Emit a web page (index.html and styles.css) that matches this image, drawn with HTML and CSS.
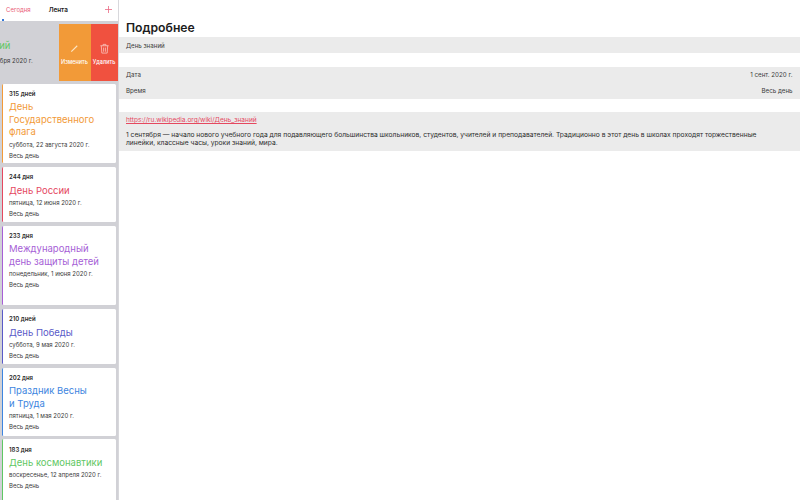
FILE: index.html
```html
<!DOCTYPE html>
<html lang="ru">
<head>
  <meta charset="UTF-8">
  <meta name="viewport" content="width=device-width, initial-scale=1.0">
  <title>Подробнее</title>
  <link rel="stylesheet" href="styles.css">
</head>
<body>
  <div class="sidebar">
    <div class="nav">
      <span class="nav-link">Сегодня</span>
      <span class="nav-title">Лента</span>
      <svg class="nav-add" viewBox="0 0 7 7"><path d="M3.5 0v7M0 3.5h7" fill="none" stroke="#ea6a84" stroke-width="0.8"/></svg>
    </div>
    <div class="progress"><div class="progress-dot"></div></div>
    <div class="swipe-row">
      <div class="swipe-text">
        <div class="swipe-title">День знаний</div>
        <div class="swipe-date">вторник, 1 сентября 2020 г.</div>
      </div>
      <div class="swipe-btn edit">
        <svg class="swipe-icon" viewBox="0 0 12 12"><path d="M2.5 9.5 9 3" fill="none" stroke="#fbe6c6" stroke-width="1.2"/></svg>
        <span>Изменить</span>
      </div>
      <div class="swipe-btn del">
        <svg class="swipe-icon" viewBox="0 0 12 12" fill="none" stroke="#fbd0cb" stroke-width="0.8"><path d="M1.5 3h9M4.5 3V1.5h3V3M2.5 3l.6 8h5.8l.6-8M5 5v4.5M7 5v4.5"/></svg>
        <span>Удалить</span>
      </div>
    </div>
    <div class="card orange h-80">
      <div class="card-days">315 дней</div>
      <div class="card-title">День Государственного флага</div>
      <div class="card-date">суббота, 22 августа 2020 г.</div>
      <div class="card-date">Весь день</div>
    </div>
    <div class="card red h-55">
      <div class="card-days">244 дня</div>
      <div class="card-title">День России</div>
      <div class="card-date">пятница, 12 июня 2020 г.</div>
      <div class="card-date">Весь день</div>
    </div>
    <div class="card purple h-80">
      <div class="card-days">233 дня</div>
      <div class="card-title">Международный<br>день защиты детей</div>
      <div class="card-date">понедельник, 1 июня 2020 г.</div>
      <div class="card-date">Весь день</div>
    </div>
    <div class="card indigo h-55">
      <div class="card-days">210 дней</div>
      <div class="card-title">День Победы</div>
      <div class="card-date">суббота, 9 мая 2020 г.</div>
      <div class="card-date">Весь день</div>
    </div>
    <div class="card blue h-68">
      <div class="card-days">202 дня</div>
      <div class="card-title">Праздник Весны<br>и Труда</div>
      <div class="card-date">пятница, 1 мая 2020 г.</div>
      <div class="card-date">Весь день</div>
    </div>
    <div class="card green h-80">
      <div class="card-days">183 дня</div>
      <div class="card-title">День космонавтики</div>
      <div class="card-date">воскресенье, 12 апреля 2020 г.</div>
      <div class="card-date">Весь день</div>
    </div>
  </div>
  <div class="detail">
    <h1>Подробнее</h1>
    <div class="group">
      <div class="row">День знаний</div>
    </div>
    <div class="group">
      <div class="row"><span>Дата</span><span>1 сент. 2020 г.</span></div>
      <div class="row"><span>Время</span><span>Весь день</span></div>
    </div>
    <div class="group">
      <div class="row"><a class="link" href="#">https://ru.wikipedia.org/wiki/День_знаний</a></div>
      <div class="row note">1 сентября — начало нового учебного года для подавляющего большинства школьников, студентов, учителей и преподавателей. Традиционно в этот день в школах проходят торжественные линейки, классные часы, уроки знаний, мира.</div>
    </div>
  </div>
</body>
</html>
```

FILE: styles.css
```css
* {
  margin: 0;
  padding: 0;
  box-sizing: border-box;
}
html, body {
  height: 100%;
  overflow: hidden;
}
body {
  font-family: Inter, 'Liberation Sans', sans-serif;
  display: flex;
  background: #ffffff;
  color: #2b2b2b;
}
.sidebar {
  width: 117.5px;
  height: 500px;
  flex-shrink: 0;
  background: #d1d1d6;
  overflow: hidden;
}
.nav {
  height: 19px;
  background: #ffffff;
  display: flex;
  align-items: center;
  padding: 0 6px;
}
.nav-link {
  font-size: 6px;
  color: #ea5c78;
}
.nav-title {
  font-size: 6.4px;
  font-weight: 600;
  color: #222222;
  margin-left: 18px;
}
.nav-add {
  margin-left: auto;
  width: 7px;
  height: 7px;
}
.progress {
  height: 2px;
  background: #ffffff;
}
.progress-dot {
  width: 2px;
  height: 2px;
  margin-left: 2px;
  background: #3478d8;
}
.swipe-row {
  display: flex;
  height: 57.5px;
  margin-top: 2.8px;
  overflow: hidden;
}
.swipe-text {
  width: 58.5px;
  overflow: hidden;
  padding-top: 16px;
  white-space: nowrap;
}
.swipe-title {
  margin-left: -49px;
  color: #5fc763;
  font-size: 9.5px;
  line-height: 12.5px;
  margin-bottom: 3px;
}
.swipe-date {
  margin-left: -48px;
  font-size: 6px;
  line-height: 11px;
  color: #3a3a3a;
}
.swipe-btn {
  display: flex;
  flex-direction: column;
  align-items: center;
  color: #ffffff;
  font-size: 5.5px;
  font-weight: 500;
  padding-top: 19px;
  white-space: nowrap;
}
.swipe-btn.edit {
  width: 32px;
  background: #f29a38;
}
.swipe-btn.del {
  width: 27px;
  background: #f0513f;
}
.swipe-icon {
  width: 11px;
  height: 11px;
  margin-bottom: 5px;
}
.card {
  width: 114px;
  margin: 3.8px 0 0 2px;
  padding: 6.2px 4px 0 6px;
  background: #ffffff;
  border-left: 1.7px solid #888888;
  border-radius: 1.5px;
}
.swipe-row + .card {
  margin-top: 2.3px;
}
.h-55 {
  height: 54.7px;
}
.h-68 {
  height: 68px;
}
.h-80 {
  height: 79.7px;
}
.card-days {
  font-size: 6px;
  line-height: 7px;
  font-weight: 600;
  color: #2b2b2b;
}
.card-title {
  font-size: 9.5px;
  line-height: 12.5px;
  margin: 4.3px 0 0;
}
.card-date {
  font-size: 6px;
  line-height: 11px;
  color: #3a3a3a;
}
.orange { border-left-color: #f29a38; }
.orange .card-title { color: #f29a38; }
.red { border-left-color: #e5485f; }
.red .card-title { color: #e5485f; }
.purple { border-left-color: #a65fd6; }
.purple .card-title { color: #a65fd6; }
.indigo { border-left-color: #5a5ac8; }
.indigo .card-title { color: #5a5ac8; }
.blue { border-left-color: #3d85e0; }
.blue .card-title { color: #3d85e0; }
.green { border-left-color: #5fc763; }
.green .card-title { color: #5fc763; }
.detail {
  flex: 1;
  padding-top: 19px;
  border-left: 1px solid #d8d8dc;
}
h1 {
  font-size: 12.2px;
  line-height: 18px;
  font-weight: 600;
  color: #1c1c1c;
  margin-left: 7.5px;
}
.group {
  background: #ebebeb;
  margin-bottom: 13.5px;
}
.row {
  min-height: 16px;
  padding: 0 7.5px;
  display: flex;
  align-items: center;
  justify-content: space-between;
  font-size: 6.2px;
  color: #3a3a3a;
}
.link {
  color: #e5485f;
  font-size: 6.55px;
}
.row.note {
  display: block;
  padding: 3px 35px 4px 7.5px;
  font-size: 6.7px;
  line-height: 8px;
  min-height: 23px;
  color: #2b2b2b;
}
```
